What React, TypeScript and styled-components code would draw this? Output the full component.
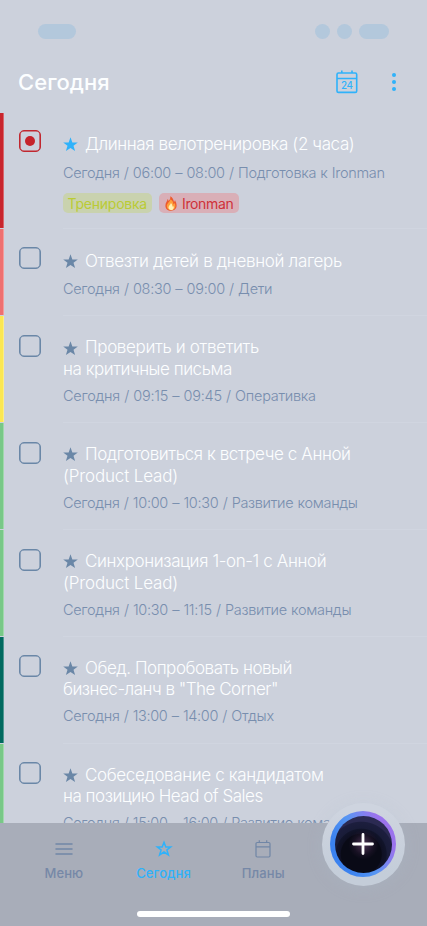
import React from "react";
import styled, { createGlobalStyle } from "styled-components";

const color = {
  page: "#ccd1dc",
  nav: "#a8adb9",
  accent: "#2fb2fa",
  muted: "#788eae",
  icon: "#6a87a7",
  title: "#fcfeff",
};

const GlobalStyle = createGlobalStyle`
  * { box-sizing: border-box; }
  body { margin: 0; background: ${color.page}; }
`;

const Screen = styled.div`
  position: relative;
  display: flex;
  flex-direction: column;
  width: 427px;
  height: 926px;
  overflow: hidden;
  background: ${color.page};
  font-family: Inter, "Open Sans", sans-serif;
`;

const StatusBar = styled.div`
  display: flex;
  flex: none;
  gap: 7px;
  height: 39px;
  padding: 24px 38px 0;
`;

const StatusPill = styled.span<{ $width: number; $push?: boolean }>`
  width: ${(p) => p.$width}px;
  height: 15px;
  margin-right: ${(p) => (p.$push ? "auto" : "0")};
  border-radius: 8px;
  background: #b3c8dc;
`;

const Header = styled.header`
  display: flex;
  flex: none;
  align-items: flex-start;
  height: 73.6px;
  padding: 0 30px 0 18px;
`;

const Heading = styled.h1`
  flex: 1;
  margin: 0;
  padding-top: 26px;
  color: ${color.title};
  font-size: 22px;
  font-weight: 500;
  line-height: 34px;
  letter-spacing: 0.04px;
`;

const HeaderIcons = styled.div`
  display: flex;
  gap: 33px;
  padding-top: 31px;
`;

const TaskList = styled.ul`
  flex: 1;
  min-height: 0;
  margin: 0;
  padding: 0;
  overflow: hidden;
  list-style: none;
`;

const TaskRow = styled.li<{ $height: number }>`
  display: flex;
  height: ${(p) => p.$height}px;
`;

const PriorityBar = styled.span<{ $color: string }>`
  width: 4px;
  margin-bottom: 1.2px;
  flex: none;
  background: ${(p) => p.$color};
  border-right: 0.5px solid rgba(255, 255, 255, 0.3);
`;

const CheckBox = styled.span<{ $active?: boolean }>`
  display: grid;
  place-items: center;
  flex: none;
  width: 22px;
  height: 22px;
  margin: ${(p) => (p.$active ? 17.4 : 18.3)}px 22px 0 15px;
  border: 1px solid ${(p) => (p.$active ? "#c1272f" : color.icon)};
  border-radius: 5px;
  box-shadow: inset 0 0 0 0.6px ${(p) => (p.$active ? "#c1272f" : color.icon)};
`;

const CheckDot = styled.span`
  width: 10px;
  height: 10px;
  border-radius: 50%;
  background: #c5232b;
`;

const TaskBody = styled.div<{ $tall: boolean }>`
  display: flex;
  flex: 1;
  flex-direction: column;
  align-items: flex-start;
  padding-top: ${(p) => (p.$tall ? 20.9 : 21.7)}px;
  border-bottom: 1px solid #d0d5e0;
`;

const TitleLine = styled.div<{ $track: number }>`
  display: flex;
  align-items: center;
  height: 21.4px;
  color: ${color.title};
  font-size: 17px;
  font-weight: 300;
  line-height: 21.4px;
  letter-spacing: ${(p) => p.$track}px;
  white-space: pre;
`;

const StarBox = styled.span`
  display: flex;
  width: 22px;
`;

const Meta = styled.div<{ $tall: boolean; $track: number }>`
  height: 18px;
  margin-top: ${(p) => (p.$tall ? 6.6 : 8.2)}px;
  color: ${color.muted};
  font-size: 14.5px;
  font-weight: 300;
  line-height: 18px;
  letter-spacing: ${(p) => p.$track}px;
  word-spacing: 0.5px;
  white-space: pre;
`;

const Tags = styled.div`
  display: flex;
  gap: 7px;
  margin-top: 11.4px;
`;

const Tag = styled.span<{ $tone: "lime" | "red" }>`
  display: flex;
  align-items: center;
  gap: 4px;
  height: 19.5px;
  width: ${(p) => (p.$tone === "lime" ? 89 : 80)}px;
  padding-left: ${(p) => (p.$tone === "lime" ? 4.5 : 5)}px;
  border-radius: 5px;
  background: ${(p) => (p.$tone === "lime" ? "#c9d2ae" : "#d9afb7")};
  color: ${(p) => (p.$tone === "lime" ? "#bacb34" : "#cf3139")};
  font-size: 14px;
  font-weight: 400;
  line-height: 19px;
  letter-spacing: ${(p) => (p.$tone === "lime" ? -0.24 : -0.36)}px;
`;

const NavBar = styled.nav`
  display: flex;
  flex: none;
  flex-direction: column;
  align-items: center;
  height: 103px;
  background: ${color.nav};
`;

const NavItems = styled.div`
  display: grid;
  grid-template-columns: repeat(3, 99.7px);
  align-self: flex-start;
  height: 88px;
  padding: 15px 0 0 14px;
`;

const NavItem = styled.div<{ $active?: boolean }>`
  display: flex;
  flex-direction: column;
  align-items: center;
  gap: 3.6px;
  color: ${(p) => (p.$active ? color.accent : "#7688a7")};
  font-size: 13px;
  font-weight: 500;
  line-height: 18px;
  letter-spacing: 0.1px;
`;

const HomeIndicator = styled.span`
  width: 153px;
  height: 6px;
  border-radius: 3px;
  background: #fff;
`;

const AddHalo = styled.div`
  position: absolute;
  top: 803px;
  left: 321.5px;
  display: grid;
  justify-items: center;
  padding-top: 8px;
  width: 83px;
  height: 83px;
  border-radius: 50%;
  background: linear-gradient(#ced4df 10%, #c4cdd9 85%);
  box-shadow: 0 2px 16px rgba(175, 190, 210, 0.22);
`;

const AddRing = styled.button`
  display: grid;
  place-items: center;
  width: 66px;
  height: 66px;
  padding: 0;
  border: 0;
  border-radius: 50%;
  background: linear-gradient(62deg, #3b82ef 22%, #5796f3 48%, #9b73ed 78%);
`;

const AddCore = styled.span`
  display: grid;
  place-items: center;
  width: 57px;
  height: 57px;
  border-radius: 50%;
  background:
    radial-gradient(circle at 50% 50%, rgba(100, 65, 105, 0.75) 0, rgba(45, 28, 55, 0.4) 10px, transparent 15px),
    radial-gradient(circle at 46% 67%, #090a16 0 20px, #0f1023 21px, #11142a 25px, #191c38 26px, #1c1e3e 32px, #2b2a52 33px);
`;

function Star({ fill }: { fill: string }) {
  return (
    <svg width="15" height="15" viewBox="0 0 15 15">
      <path fill={fill} d="M7.500.3 9.350 5.500h5.450l-4.300 3.200 1.600 5.400-4.600-3.200-4.600 3.200 1.600-5.400L.2 5.500h5.450Z" />
    </svg>
  );
}

function Flame() {
  return (
    <svg width="14" height="15" viewBox="0 0 14 15">
      <path fill="#ed5a2c" d="M6.200.2c.5 2.100-.4 3.500-1.600 4.800-.2-.8-.5-1.400-1-1.900C3.500 5.300 1.400 6.700 1.400 9.700c0 3 2.300 5 5.600 5s5.600-2 5.600-5.200c0-2.200-.9-3.700-1.500-5.200-.6.6-.9 1.200-1 2C9.600 3.800 8.600 1.400 6.200.2Z" />
      <path fill="#ff9f3a" d="M6.400 3.300c.2 2.300-3.600 3.700-3.600 6.800 0 2.500 1.800 4.100 4.200 4.100s4.400-1.600 4.400-4.200c0-1.200-.4-2.100-.9-2.900-.2.700-.6 1.100-1.100 1.400.1-2.200-1.200-4.300-3-5.200Z" />
      <path fill="#fff1b4" d="M6.900 7c.1 1.600-2.400 2.400-2.400 4.600 0 1.500 1.100 2.500 2.500 2.500s2.800-1 2.800-2.600c0-.7-.2-1.200-.6-1.600-.2.400-.5.600-.8.700.1-1.400-.5-2.900-1.500-3.600Z" />
    </svg>
  );
}

function CalendarDay() {
  return (
    <svg width="22" height="24" viewBox="0 0 22 24" fill="none" stroke={color.accent} strokeWidth="1.6">
      <rect x="1" y="3" width="19.700" height="19.400" rx="1.500" />
      <path d="M1 8.500h19.700M5.800.4V3M16 .4V3" />
      <text x="10.800" y="18.900" textAnchor="middle" fill={color.accent} stroke="none" fontFamily="Inter, sans-serif" fontSize="9.800" fontWeight="500" letterSpacing="-.4">24</text>
    </svg>
  );
}

function MoreDots() {
  return (
    <svg width="6" height="24" viewBox="0 0 6 24" fill={color.accent}>
      <circle cx="3" cy="5" r="2" />
      <circle cx="3" cy="12" r="2" />
      <circle cx="3" cy="19" r="2" />
    </svg>
  );
}

function MenuIcon() {
  return (
    <svg width="18" height="22" viewBox="0 0 18 22" stroke="#7086a6" strokeWidth="1.500" strokeLinecap="round">
      <path d="M1 6h16M1 11h16M1 16h16" />
    </svg>
  );
}

function StarOutline() {
  return (
    <svg width="18" height="22" viewBox="0 0 18 22" fill="none" stroke={color.accent} strokeWidth="1.500">
      <path d="m9 4.300 1.800 4.600h4.900L11.900 12l1.500 4.900L9 14l-4.400 2.900L6.100 12 2.300 8.900h4.900Z" />
    </svg>
  );
}

function PlansIcon() {
  return (
    <svg width="18" height="22" viewBox="0 0 18 22" fill="none" stroke="#7086a6" strokeWidth="1.200">
      <rect x="2" y="4.500" width="14" height="14.500" rx="1.200" />
      <path d="M2 8.800h14M5.300 2.300v2.200M12.700 2.300v2.200" />
    </svg>
  );
}

interface Task {
  bar: string;
  height: number;
  lines: [string, number][];
  meta: [string, number];
  important?: boolean;
}

const tasks: Task[] = [
  { bar: "#c8252d", height: 116.3, important: true, lines: [["Длинная велотренировка (2 часа)", -0.385]], meta: ["Сегодня / 06:00 – 08:00 / Подготовка к Ironman", -0.31] },
  { bar: "#ee7070", height: 87.6, lines: [["Отвезти детей в дневной лагерь", -0.328]], meta: ["Сегодня / 08:30 – 09:00 / Дети", -0.3] },
  { bar: "#fbe752", height: 106.9, lines: [["Проверить и ответить", -0.342], ["на критичные письма", -0.47]], meta: ["Сегодня / 09:15 – 09:45 / Оперативка", -0.27] },
  { bar: "#78c887", height: 106.9, lines: [["Подготовиться к встрече с Анной", -0.4], ["(Product Lead)", -0.15]], meta: ["Сегодня / 10:00 – 10:30 / Развитие команды", -0.31] },
  { bar: "#78c887", height: 106.9, lines: [["Синхронизация 1-on-1 с Анной", -0.385], ["(Product Lead)", -0.15]], meta: ["Сегодня / 10:30 – 11:15 / Развитие команды", -0.3] },
  { bar: "#00695f", height: 106.9, lines: [["Обед. Попробовать новый", -0.46], ['бизнес-ланч в "The Corner"', -0.5]], meta: ["Сегодня / 13:00 – 14:00 / Отдых", -0.33] },
  { bar: "#78c887", height: 106.9, lines: [["Собеседование с кандидатом", -0.37], ["на позицию Head of Sales", -0.48]], meta: ["Сегодня / 15:00 – 16:00 / Развитие команды", -0.31] },
];

function TaskItem({ task }: { task: Task }) {
  const tall = task.lines.length > 1;
  return (
    <TaskRow $height={task.height}>
      <PriorityBar $color={task.bar} />
      <CheckBox $active={task.important}>{task.important && <CheckDot />}</CheckBox>
      <TaskBody $tall={tall}>
        {task.lines.map(([text, track], i) => (
          <TitleLine key={text} $track={track}>
            {i === 0 && (
              <StarBox>
                <Star fill={task.important ? color.accent : color.icon} />
              </StarBox>
            )}
            {text}
          </TitleLine>
        ))}
        <Meta $tall={tall} $track={task.meta[1]}>{task.meta[0]}</Meta>
        {task.important && (
          <Tags>
            <Tag $tone="lime">Тренировка</Tag>
            <Tag $tone="red"><Flame />Ironman</Tag>
          </Tags>
        )}
      </TaskBody>
    </TaskRow>
  );
}

export default function App() {
  return (
    <>
      <GlobalStyle />
      <Screen>
        <StatusBar>
          <StatusPill $width={38} $push />
          <StatusPill $width={15} />
          <StatusPill $width={15} />
          <StatusPill $width={30} />
        </StatusBar>
        <Header>
          <Heading>Сегодня</Heading>
          <HeaderIcons>
            <CalendarDay />
            <MoreDots />
          </HeaderIcons>
        </Header>
        <TaskList>
          {tasks.map((task) => <TaskItem key={task.meta[0]} task={task} />)}
        </TaskList>
        <NavBar>
          <NavItems>
            <NavItem><MenuIcon />Меню</NavItem>
            <NavItem $active><StarOutline />Сегодня</NavItem>
            <NavItem><PlansIcon />Планы</NavItem>
          </NavItems>
          <HomeIndicator />
        </NavBar>
        <AddHalo>
          <AddRing aria-label="Добавить">
            <AddCore>
              <svg width="24" height="24" viewBox="0 0 24 24" stroke="#fff" strokeWidth="2.800" strokeLinecap="round">
                <path d="M12 2.500v19M2.500 12h19" />
              </svg>
            </AddCore>
          </AddRing>
        </AddHalo>
      </Screen>
    </>
  );
}
